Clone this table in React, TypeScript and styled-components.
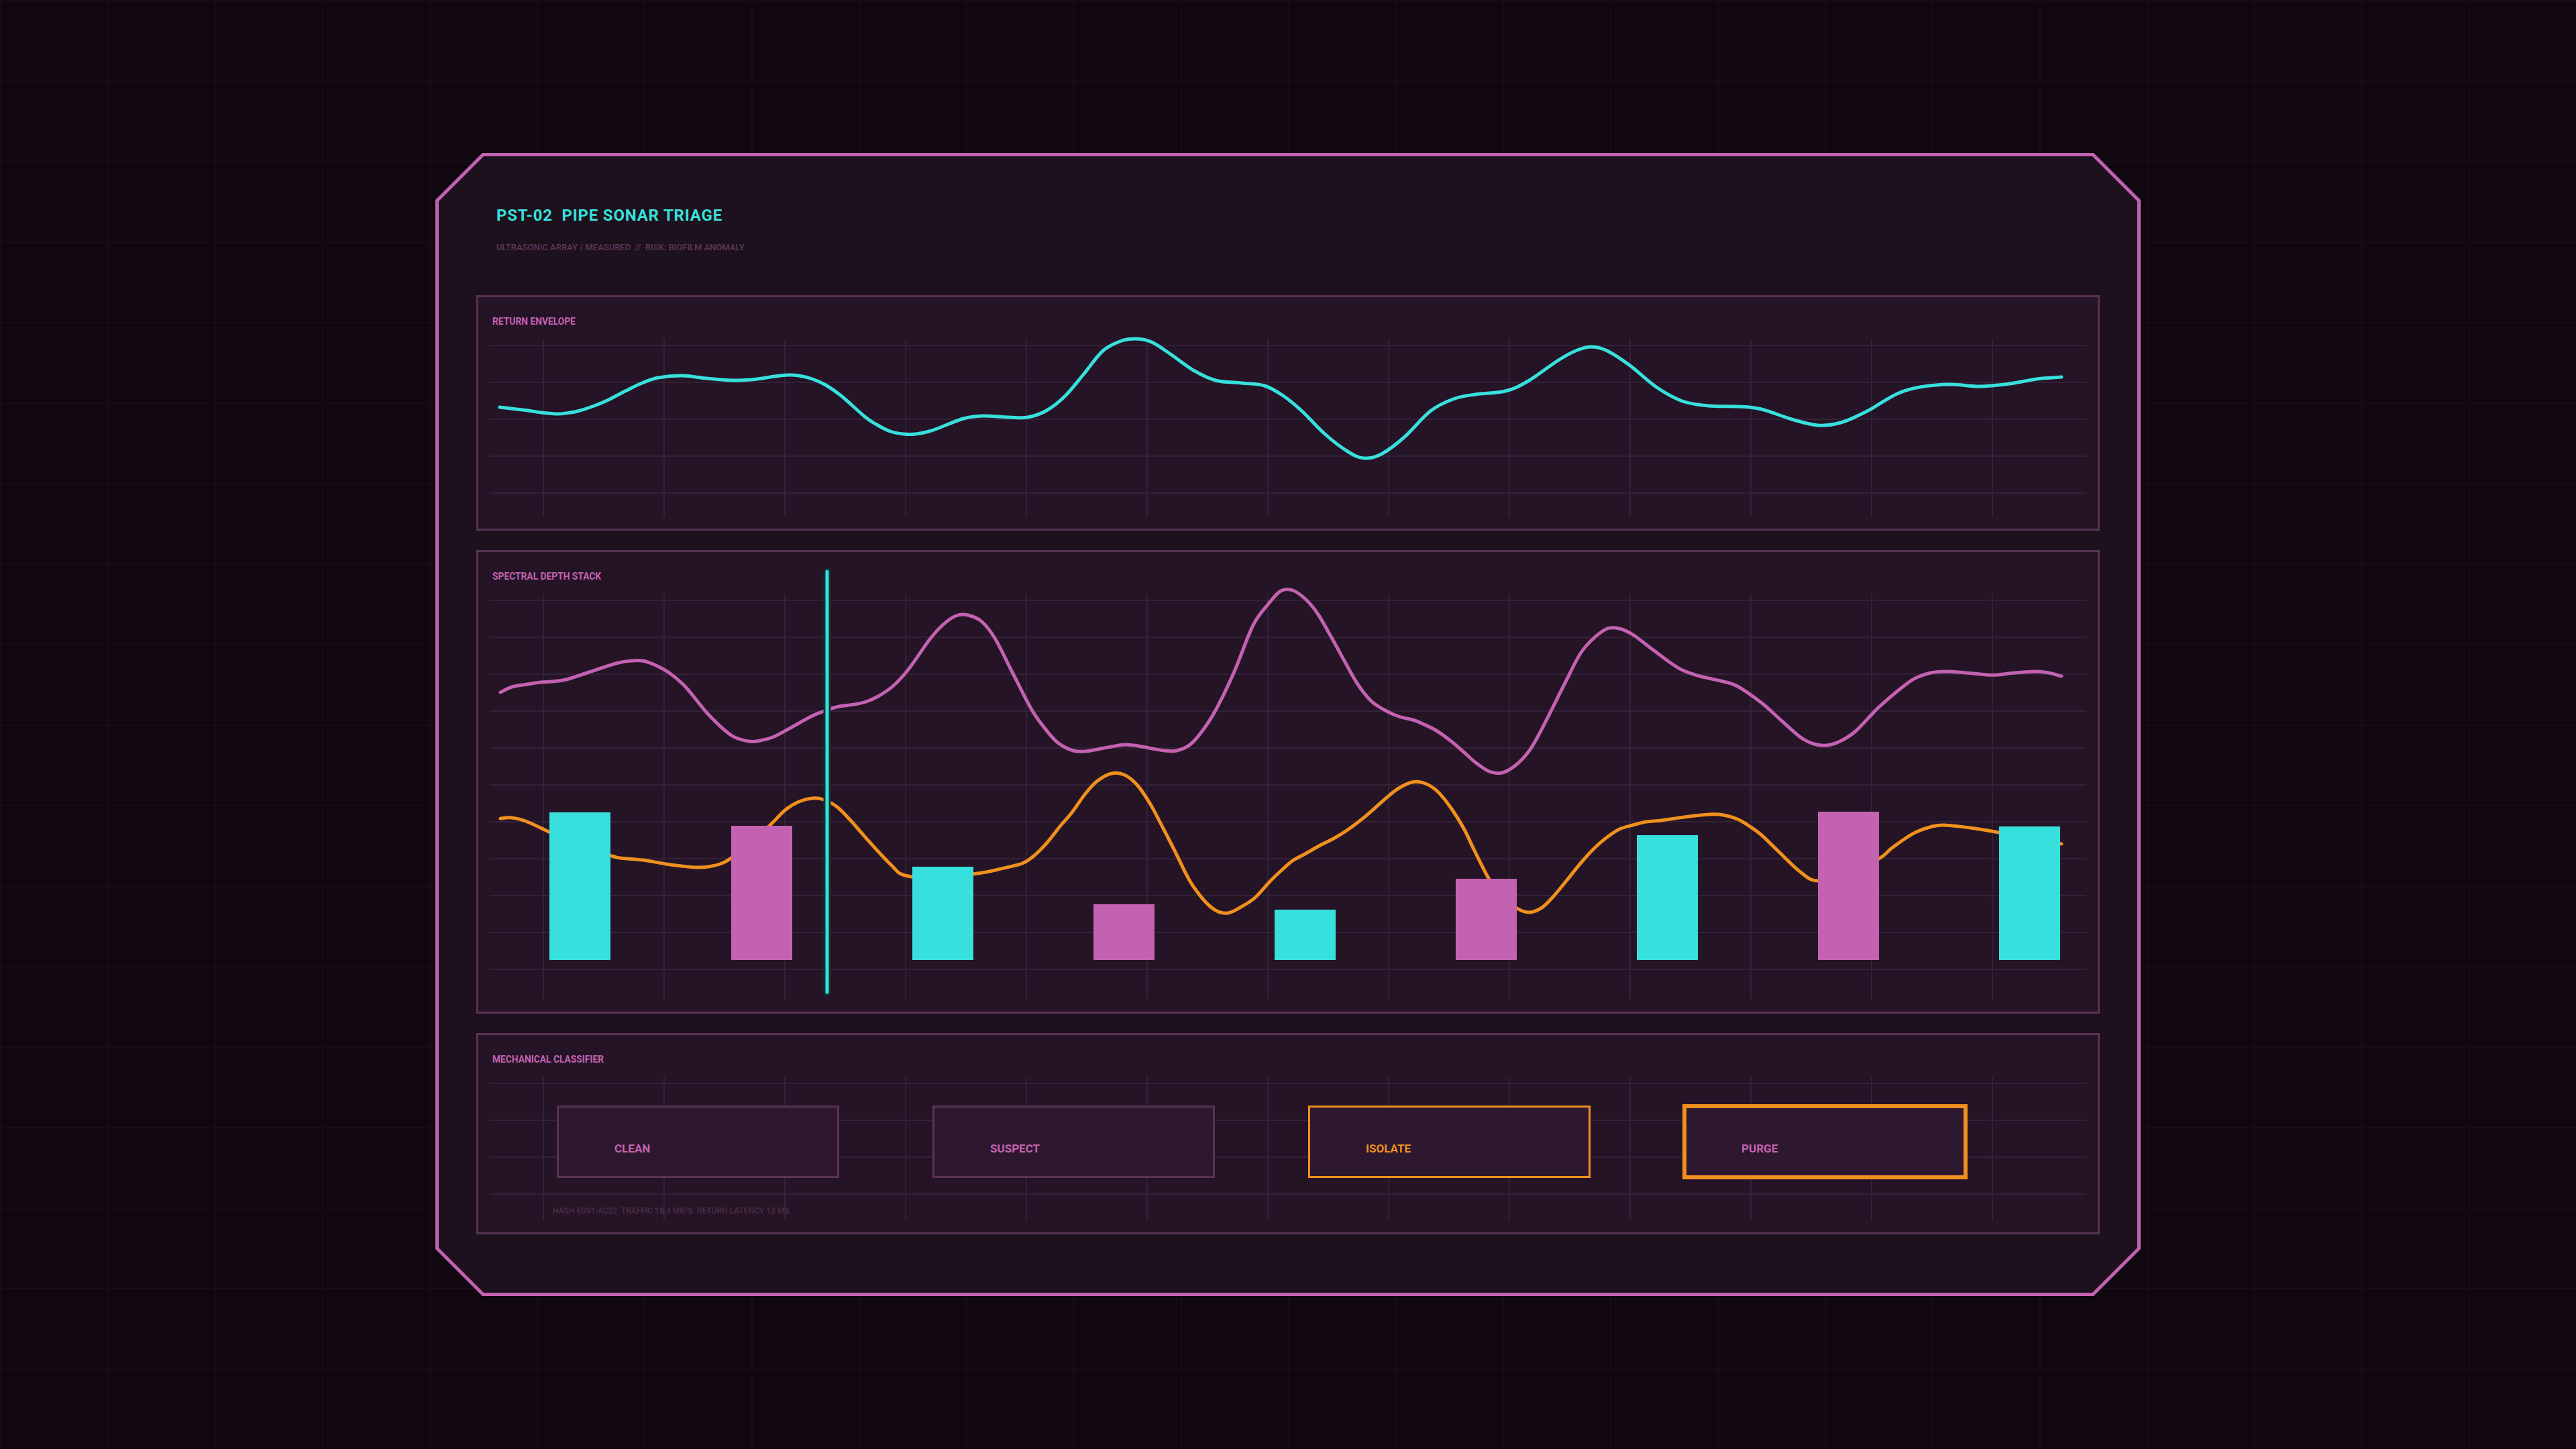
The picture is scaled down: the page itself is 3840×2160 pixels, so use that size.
import React from 'react';
import styled, { createGlobalStyle, css } from 'styled-components';

const CYAN = '#38e0dd';
const PINK = '#c462b2';
const ORANGE = '#f0901e';
const GRID = '#35213a';

const GlobalStyle = createGlobalStyle`
  html, body {
    margin: 0;
    padding: 0;
  }
  body {
    background-color: #100710;
    background-image:
      linear-gradient(90deg, #170d17 0 2px, transparent 2px),
      linear-gradient(180deg, #170d17 0 2px, transparent 2px);
    background-size: 160px 120px;
    font-family: Roboto, 'Liberation Sans', sans-serif;
  }
`;

const Page = styled.main`
  min-height: 100vh;
  display: flex;
  align-items: center;
  justify-content: center;
`;

const Frame = styled.div`
  width: 2542px;
  box-sizing: border-box;
  padding: 5px;
  background: ${PINK};
  clip-path: polygon(
    70px 0, calc(100% - 70px) 0, 100% 70px, 100% calc(100% - 70px),
    calc(100% - 70px) 100%, 70px 100%, 0 calc(100% - 70px), 0 70px
  );
`;

const FrameBody = styled.div`
  background: #1d111d;
  padding: 74px 56px 87px;
  display: flex;
  flex-direction: column;
  clip-path: polygon(
    67px 0, calc(100% - 67px) 0, 100% 67px, 100% calc(100% - 67px),
    calc(100% - 67px) 100%, 67px 100%, 0 calc(100% - 67px), 0 67px
  );
`;

const Header = styled.header`
  display: flex;
  flex-direction: column;
  gap: 26px;
  padding-left: 30px;
  margin-bottom: 63px;
`;

const Title = styled.h1`
  margin: 0;
  font: 700 24px/28px Roboto, 'Liberation Sans', sans-serif;
  letter-spacing: 0.8px;
  color: ${CYAN};
  white-space: pre;
`;

const Subtitle = styled.div`
  font: 500 13px/16px Roboto, 'Liberation Sans', sans-serif;
  color: #5d3857;
  white-space: pre;
`;

const Stack = styled.div`
  display: flex;
  flex-direction: column;
  gap: 29px;
`;

const Panel = styled.section`
  border: 3px solid #5a3352;
  background: #251425;
  padding: 28px 17px 18px;
  display: flex;
  flex-direction: column;
`;

const PanelLabel = styled.div`
  font: 700 13.8px/16px Roboto, 'Liberation Sans', sans-serif;
  color: ${PINK};
  margin: 0 0 18px 4px;
`;

const ChartArea = styled.div<{ $h: number }>`
  height: ${(p) => p.$h}px;
  box-sizing: border-box;
  background-image:
    linear-gradient(90deg, ${GRID} 0 2px, transparent 2px),
    linear-gradient(180deg, ${GRID} 0 2px, transparent 2px);
  background-size: 180px 100%, 100% 55px;
  background-position: 79px 0, 0 9px;
`;

const ChartSvg = styled.svg`
  display: block;
  width: 100%;
  height: 100%;
  overflow: visible;
`;

const ClassifierArea = styled(ChartArea)`
  padding: 43px 0 0 100px;
  display: flex;
  flex-direction: column;
`;

const ButtonRow = styled.div`
  display: flex;
  gap: 139px;
`;

const ClassButton = styled.button<{ $border: string; $text: string; $active?: boolean }>`
  width: 421px;
  height: 108px;
  box-sizing: border-box;
  border: 3px solid ${(p) => p.$border};
  background: #2e1830;
  padding: 51px 0 0 83px;
  display: flex;
  align-items: flex-start;
  font: 700 17px/20px Roboto, 'Liberation Sans', sans-serif;
  color: ${(p) => p.$text};
  cursor: pointer;
  ${(p) =>
    p.$active &&
    css`
      border-width: 4px;
      padding: 50px 0 0 82px;
      box-shadow: 0 0 0 2px ${p.$border};
    `}
`;

const Footer = styled.div`
  margin: 41px 0 0 -6px;
  font: 500 12px/16px Roboto, 'Liberation Sans', sans-serif;
  color: #4c2d47;
  white-space: pre;
`;

type Pt = [number, number];

const smooth = (pts: Pt[]) => {
  let d = `M${pts[0][0]},${pts[0][1]}`;
  for (let i = 0; i < pts.length - 1; i++) {
    const p0 = pts[i - 1] || pts[i];
    const p1 = pts[i];
    const p2 = pts[i + 1];
    const p3 = pts[i + 2] || p2;
    const c1x = p1[0] + (p2[0] - p0[0]) / 6;
    const c1y = p1[1] + (p2[1] - p0[1]) / 6;
    const c2x = p2[0] - (p3[0] - p1[0]) / 6;
    const c2y = p2[1] - (p3[1] - p1[1]) / 6;
    d += ` C${c1x.toFixed(1)},${c1y.toFixed(1)} ${c2x.toFixed(1)},${c2y.toFixed(1)} ${p2[0]},${p2[1]}`;
  }
  return d;
};

// return envelope, chart-local px
const envelope: Pt[] = [
  [15, 102], [50, 106], [77, 110], [100, 112], [113, 111], [131, 108], [153, 101], [175, 92],
  [202, 78], [227, 66], [251, 58], [287, 55], [323, 59], [363, 62], [399, 60], [425, 56],
  [445, 54], [461, 55], [481, 60], [501, 69], [524, 85], [559, 116], [577, 128], [597, 138],
  [617, 142], [635, 142], [655, 138], [672, 132], [706, 119], [734, 115], [774, 117], [802, 117],
  [830, 107], [858, 85], [886, 52], [914, 18], [942, 3], [964, 0], [987, 5], [1015, 23],
  [1049, 47], [1082, 62], [1121, 66], [1155, 70], [1183, 85], [1211, 108], [1245, 142],
  [1279, 168], [1303, 178], [1329, 172], [1363, 147], [1402, 108], [1436, 90], [1469, 83],
  [1514, 78], [1548, 63], [1593, 32], [1621, 17], [1643, 12], [1666, 18], [1700, 40],
  [1739, 72], [1778, 93], [1817, 100], [1862, 101], [1896, 105], [1941, 120], [1980, 129],
  [2014, 125], [2053, 108], [2098, 82], [2132, 72], [2177, 68], [2221, 71], [2266, 67],
  [2306, 60], [2343, 57],
];

const depth: Pt[] = [
  [16, 147], [33, 139], [56, 135], [76, 132], [93, 131], [114, 128], [148, 117], [188, 104],
  [211, 100], [228, 100], [248, 107], [269, 119], [292, 139], [326, 180], [360, 211], [386, 220],
  [403, 219], [424, 213], [452, 198], [481, 182], [504, 173], [521, 168], [544, 165], [561, 161],
  [579, 153], [602, 137], [624, 113], [656, 68], [676, 46], [695, 33], [713, 32], [734, 42],
  [754, 68], [779, 117], [808, 173], [831, 205], [848, 223], [870, 234], [888, 235], [906, 232],
  [927, 228], [947, 225], [967, 227], [988, 231], [1006, 234], [1024, 234], [1044, 225],
  [1062, 205], [1082, 174], [1110, 116], [1138, 47], [1161, 15], [1179, -4], [1197, -5],
  [1217, 9], [1235, 31], [1258, 71], [1274, 100], [1294, 135], [1314, 160], [1335, 174],
  [1355, 183], [1376, 188], [1391, 194], [1411, 204], [1432, 219], [1452, 236], [1470, 252],
  [1490, 265], [1509, 267], [1529, 256], [1549, 235], [1564, 210], [1585, 169], [1605, 129],
  [1626, 89], [1645, 67], [1666, 52], [1684, 52], [1704, 61], [1732, 82], [1763, 105],
  [1778, 114], [1804, 123], [1839, 131], [1860, 138], [1895, 162], [1921, 185], [1954, 214],
  [1974, 224], [1993, 226], [2013, 220], [2036, 205], [2071, 169], [2110, 136], [2127, 125],
  [2148, 118], [2171, 116], [2201, 118], [2232, 121], [2247, 121], [2273, 118], [2304, 116],
  [2324, 118], [2343, 123],
];

const pressure: Pt[] = [
  [16, 335], [33, 334], [56, 340], [90, 356], [136, 378], [182, 391], [194, 394], [228, 397],
  [263, 403], [286, 406], [309, 408], [326, 407], [346, 402], [360, 394], [390, 370],
  [418, 345], [441, 322], [461, 310], [481, 305], [498, 307], [518, 318], [538, 338], [567, 371],
  [599, 405], [619, 420], [670, 424], [720, 418], [745, 414], [771, 408], [794, 402], [811, 391],
  [831, 371], [850, 347], [868, 326], [888, 298], [906, 279], [927, 268], [946, 270], [965, 285],
  [985, 314], [1003, 348], [1021, 383], [1043, 427], [1063, 455], [1082, 472], [1101, 476],
  [1120, 467], [1141, 453], [1164, 428], [1184, 409], [1197, 398], [1217, 387], [1238, 375],
  [1258, 365], [1279, 352], [1299, 337], [1319, 320], [1337, 304], [1355, 290], [1375, 281],
  [1392, 282], [1411, 293], [1432, 318], [1452, 350], [1467, 381], [1490, 426], [1511, 455],
  [1531, 469], [1548, 475], [1567, 469], [1585, 452], [1605, 428], [1626, 402], [1645, 381],
  [1663, 365], [1684, 351], [1704, 345], [1724, 340], [1747, 338], [1781, 333], [1819, 329],
  [1839, 330], [1860, 336], [1877, 346], [1895, 359], [1921, 384], [1954, 415], [1980, 428],
  [2025, 415], [2071, 395], [2089, 380], [2110, 365], [2127, 355], [2150, 347], [2168, 345],
  [2207, 349], [2250, 356], [2300, 366], [2343, 373],
];

const bars = [
  { x: 89, top: 326, fill: CYAN },
  { x: 360, top: 346, fill: PINK },
  { x: 630, top: 407, fill: CYAN },
  { x: 900, top: 463, fill: PINK },
  { x: 1170, top: 471, fill: CYAN },
  { x: 1440, top: 425, fill: PINK },
  { x: 1710, top: 360, fill: CYAN },
  { x: 1980, top: 325, fill: PINK },
  { x: 2250, top: 347, fill: CYAN },
];

const classes = [
  { label: 'CLEAN', border: '#5a3352', text: PINK },
  { label: 'SUSPECT', border: '#5a3352', text: PINK },
  { label: 'ISOLATE', border: ORANGE, text: ORANGE },
  { label: 'PURGE', border: ORANGE, text: PINK, active: true },
];

const App = () => (
  <>
    <GlobalStyle />
    <Page>
      <Frame>
        <FrameBody>
          <Header>
            <Title>PST-02  PIPE SONAR TRIAGE</Title>
            <Subtitle>ULTRASONIC ARRAY / MEASURED  //  RISK: BIOFILM ANOMALY</Subtitle>
          </Header>
          <Stack>
            <Panel>
              <PanelLabel>RETURN ENVELOPE</PanelLabel>
              <ChartArea $h={265}>
                <ChartSvg viewBox="0 0 2380 265">
                  <path
                    d={smooth(envelope)}
                    fill="none"
                    stroke={CYAN}
                    strokeWidth={5}
                    strokeLinecap="round"
                    strokeLinejoin="round"
                  />
                </ChartSvg>
              </ChartArea>
            </Panel>
            <Panel>
              <PanelLabel>SPECTRAL DEPTH STACK</PanelLabel>
              <ChartArea $h={605}>
                <ChartSvg viewBox="0 0 2380 605">
                  <path
                    d={smooth(depth)}
                    fill="none"
                    stroke={PINK}
                    strokeWidth={5}
                    strokeLinecap="round"
                    strokeLinejoin="round"
                  />
                  <path
                    d={smooth(pressure)}
                    fill="none"
                    stroke={ORANGE}
                    strokeWidth={5}
                    strokeLinecap="round"
                    strokeLinejoin="round"
                  />
                  {bars.map((b) => (
                    <rect key={b.x} x={b.x} y={b.top} width={91} height={546 - b.top} fill={b.fill} />
                  ))}
                  <line x1={503} y1={-33} x2={503} y2={594} stroke="#0d3434" strokeWidth={11} strokeLinecap="round" />
                  <line x1={503} y1={-33} x2={503} y2={594} stroke={CYAN} strokeWidth={5} strokeLinecap="round" />
                </ChartSvg>
              </ChartArea>
            </Panel>
            <Panel>
              <PanelLabel>MECHANICAL CLASSIFIER</PanelLabel>
              <ClassifierArea $h={214}>
                <ButtonRow>
                  {classes.map((c) => (
                    <ClassButton key={c.label} $border={c.border} $text={c.text} $active={c.active}>
                      {c.label}
                    </ClassButton>
                  ))}
                </ButtonRow>
                <Footer>HASH 6D91:AC22  TRAFFIC 18.4 MB/S  RETURN LATENCY 12 MS</Footer>
              </ClassifierArea>
            </Panel>
          </Stack>
        </FrameBody>
      </Frame>
    </Page>
  </>
);

export default App;
